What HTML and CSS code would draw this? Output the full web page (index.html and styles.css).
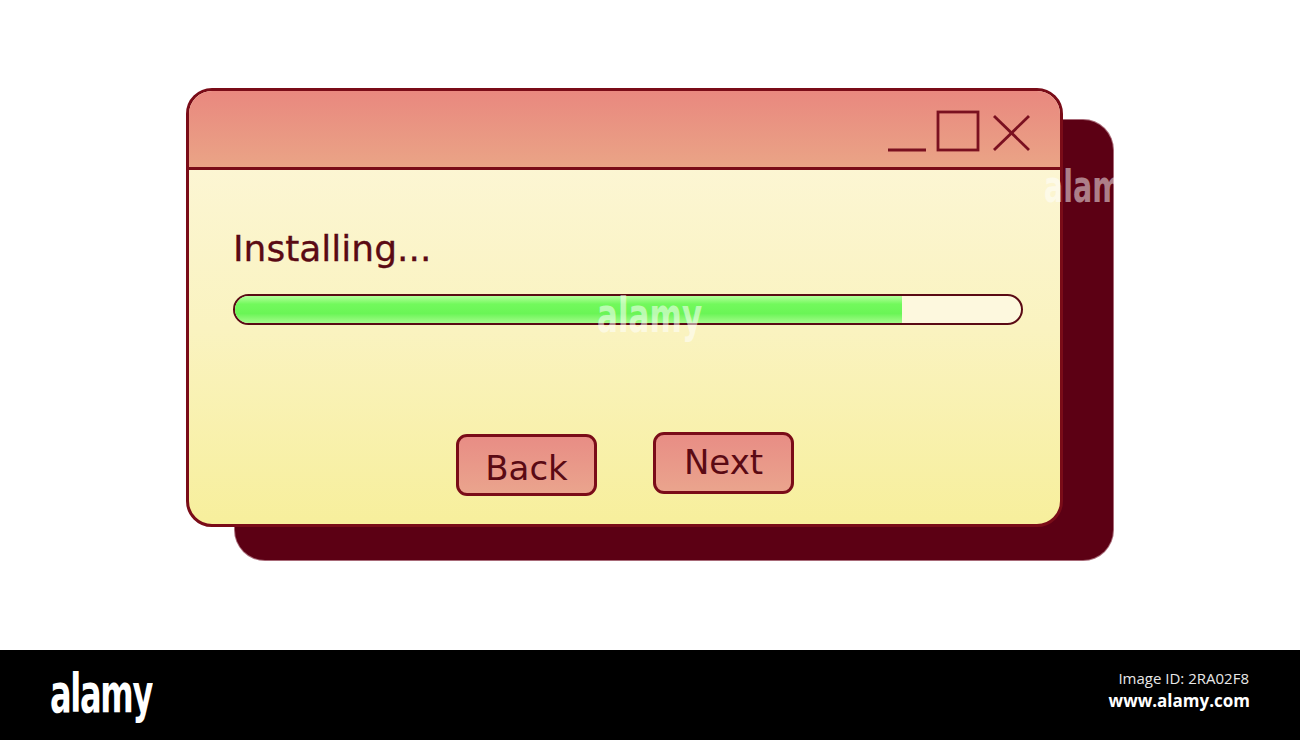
FILE: index.html
```html
<!DOCTYPE html>
<html lang="en">
<head>
    <meta charset="UTF-8">
    <meta name="viewport" content="width=device-width, initial-scale=1.0">
    <title>Installing...</title>
    <link rel="stylesheet" href="styles.css">
</head>
<body>
    <div class="stage">
        <div class="window">
            <div class="titlebar">
                <svg class="controls" width="146" height="46" viewBox="0 0 146 46">
                    <line x1="3" y1="42" x2="41" y2="42"/>
                    <rect x="53" y="4" width="40" height="38"/>
                    <line x1="109" y1="8" x2="144" y2="42"/>
                    <line x1="144" y1="8" x2="109" y2="42"/>
                </svg>
            </div>
            <div class="content">
                <div class="status">Installing...</div>
                <div class="progress">
                    <div class="progress-fill" style="width: 84.8%"></div>
                </div>
                <div class="buttons">
                    <button class="btn btn-back">Back</button>
                    <button class="btn btn-next">Next</button>
                </div>
            </div>
            <span class="mark mark-center">alamy</span>
            <span class="mark mark-edge">alam</span>
        </div>
    </div>

    <div class="footer">
        <div class="logo">alamy</div>
        <div class="meta">
            <div class="image-id">Image ID: 2RA02F8</div>
            <div class="site">www.alamy.com</div>
        </div>
    </div>
</body>
</html>
```

FILE: styles.css
```css
* { margin: 0; padding: 0; box-sizing: border-box; }
body { background: #fff; font-family: 'DejaVu Sans', Verdana, sans-serif; width: 1300px; height: 740px; overflow: hidden; }

.stage { height: 650px; padding: 88px 0 0 186px; }

.window { position: relative; width: 877px; height: 439px; border: 3px solid #7a0c18; border-radius: 26px; background: linear-gradient(180deg, #fdf7dc 0%, #faf3c0 55%, #f7ef9c 100%); }
.window::before { content: ''; position: absolute; left: 46px; top: 29px; width: 878px; height: 440px; background: #5c0014; border-radius: 30px; box-shadow: 0 0 0 1px #a86a78; z-index: -1; }

.titlebar { height: 79px; border-bottom: 3px solid #7a0c18; border-radius: 23px 23px 0 0; background: linear-gradient(180deg, #e9887f 0%, #eaa486 100%); display: flex; justify-content: flex-end; align-items: flex-start; padding: 17px 29px 0 0; }
.controls { fill: none; stroke: #7a1020; stroke-width: 2.8; }

.content { padding: 57px 37px 0 44px; }
.status { font-size: 36px; line-height: 44px; color: #5a0a14; -webkit-text-stroke: 0.3px #5a0a14; }

.progress { margin-top: 23px; height: 31px; border: 2px solid #5a0a14; border-radius: 16px; background: #fdf8de; overflow: hidden; }
.progress-fill { height: 100%; background: linear-gradient(180deg, #b4ff9c 0%, #72f95c 30%, #6af556 65%, #a4fb8a 100%); }

.buttons { display: flex; justify-content: center; gap: 56px; margin-top: 107px; padding-right: 6px; }
.btn { width: 141px; height: 62px; border: 3px solid #7a0c18; border-radius: 11px; background: linear-gradient(180deg, #e88d85 0%, #eaa48d 100%); font-family: 'DejaVu Sans', Verdana, sans-serif; font-size: 34px; color: #5a0a14; }
.btn-back { margin-top: 2px; padding-top: 6px; }
.btn-next { padding-bottom: 2px; }

.mark { position: absolute; font-family: 'DejaVu Sans Condensed', 'DejaVu Sans', sans-serif; font-weight: bold; color: rgba(255, 255, 255, 0.55); transform: scaleX(0.72); transform-origin: left top; pointer-events: none; }
.mark-center { left: 408px; top: 200px; font-size: 48px; line-height: 1; }
.mark-edge { left: 855px; top: 74px; font-size: 44px; line-height: 1; color: rgba(255, 255, 255, 0.5); }

.footer { height: 90px; background: #000; display: flex; justify-content: space-between; align-items: center; padding: 0 50px 0 50px; }
.logo { font-family: 'DejaVu Sans Condensed', 'DejaVu Sans', sans-serif; font-weight: bold; font-size: 54px; color: #fff; letter-spacing: -2px; transform: scaleX(0.66); transform-origin: left center; margin-top: -4px; }
.meta { text-align: right; color: #fff; font-family: 'Open Sans', sans-serif; margin-top: -8px; }
.image-id { font-size: 15px; line-height: 20px; color: #e8e8e8; padding-right: 1px; }
.site { font-size: 17px; font-weight: bold; line-height: 26px; }
```
